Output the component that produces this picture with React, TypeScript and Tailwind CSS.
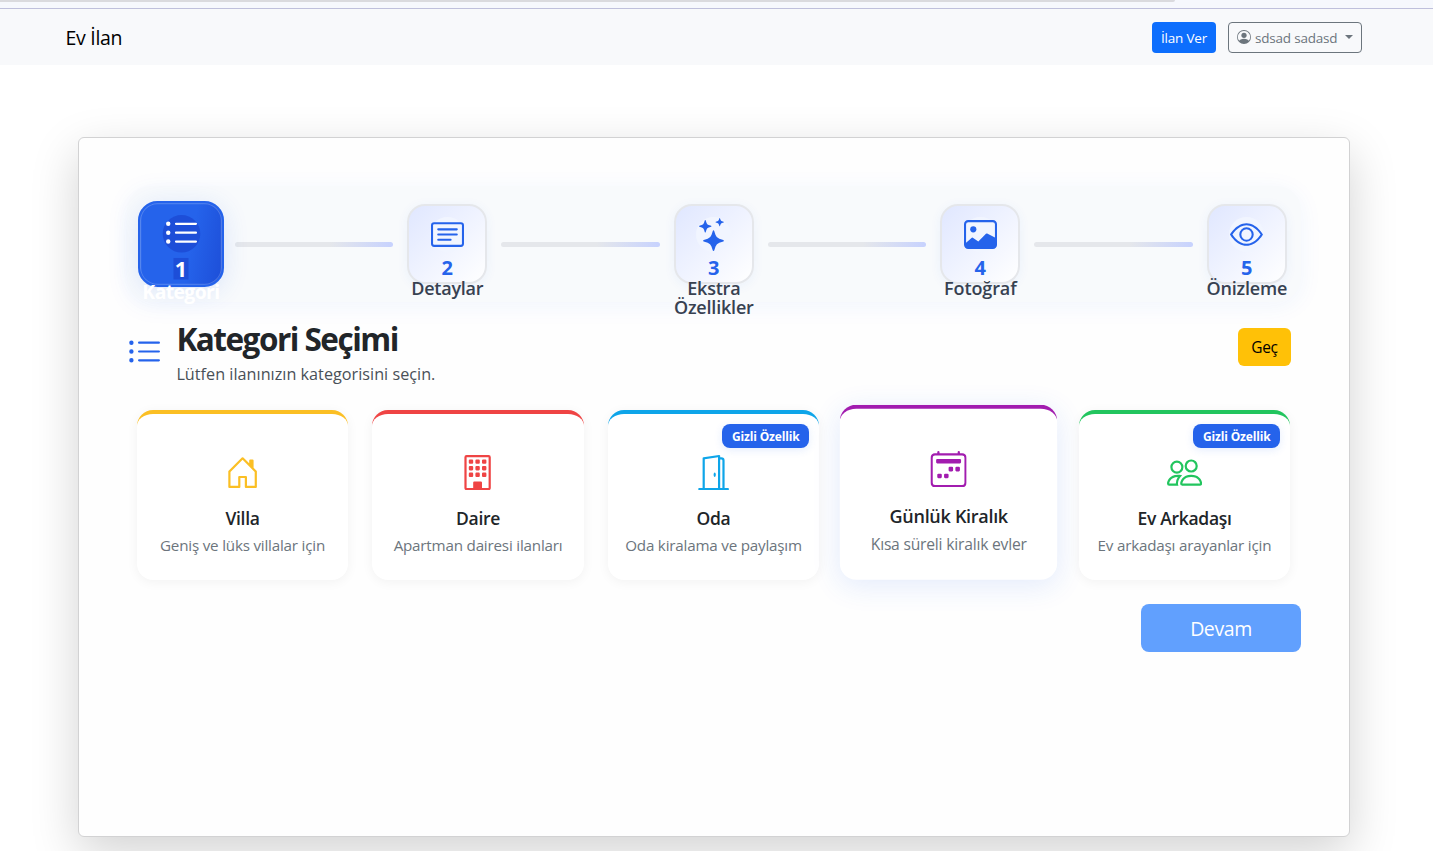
import type { IconType } from "react-icons";
import {
  BsBuilding,
  BsCalendar2Week,
  BsCardText,
  BsDoorOpen,
  BsEye,
  BsHouseDoor,
  BsImage,
  BsListUl,
  BsPeople,
  BsPersonCircle,
  BsStars,
} from "react-icons/bs";

type Step = { label: string; icon: IconType; labelClass: string };

const steps: Step[] = [
  { label: "Kategori", icon: BsListUl, labelClass: "tracking-[-0.55px]" },
  { label: "Detaylar", icon: BsCardText, labelClass: "tracking-[-0.25px]" },
  { label: "Ekstra Özellikler", icon: BsStars, labelClass: "tracking-[-0.2px]" },
  { label: "Fotoğraf", icon: BsImage, labelClass: "tracking-[-0.1px]" },
  { label: "Önizleme", icon: BsEye, labelClass: "tracking-[-0.2px]" },
];

type Category = {
  title: string;
  text: string;
  icon: IconType;
  border: string;
  color: string;
  hidden?: boolean;
  raised?: boolean;
};

const categories: Category[] = [
  { title: "Villa", text: "Geniş ve lüks villalar için", icon: BsHouseDoor, border: "border-[#fbbf24]", color: "text-[#fbbf24]" },
  { title: "Daire", text: "Apartman dairesi ilanları", icon: BsBuilding, border: "border-[#ef4444]", color: "text-[#ef4444]" },
  { title: "Oda", text: "Oda kiralama ve paylaşım", icon: BsDoorOpen, border: "border-[#0ea5e9]", color: "text-[#0ea5e9]", hidden: true },
  { title: "Günlük Kiralık", text: "Kısa süreli kiralık evler", icon: BsCalendar2Week, border: "border-[#a21caf]", color: "text-[#a21caf]", raised: true },
  { title: "Ev Arkadaşı", text: "Ev arkadaşı arayanlar için", icon: BsPeople, border: "border-[#22c55e]", color: "text-[#22c55e]", hidden: true },
];

function Header() {
  return (
    <header>
      <div className="h-2 bg-[#f6f8fd]">
        <div className="h-[2px] w-[1175px] rounded-br-lg bg-[#dadade]" />
      </div>
      <div className="h-px bg-[#bfc0dc]" />
      <div className="flex h-14 items-center justify-between bg-[#f8f9fb] pr-[71px] pl-[65.5px]">
        <span className="pt-[2px] text-[19.5px] tracking-[-0.3px] text-black">Ev İlan</span>
        <div className="flex gap-3">
          <button className="h-[31px] w-16 rounded bg-[#0d6efd] pt-[2px] text-[13.5px] tracking-[-0.2px] whitespace-nowrap text-white">
            İlan Ver
          </button>
          <button className="flex h-[31px] w-[134px] items-center rounded border border-[#6c757d] pl-2 text-[13.5px] whitespace-nowrap text-[#6c757d]">
            <BsPersonCircle className="mr-1 size-[14px]" />
            <span className="pt-[2px] tracking-[-0.2px]">sdsad sadasd</span>
            <span className="ml-2 border-x-4 border-t-4 border-x-transparent border-t-[#6c757d]" />
          </button>
        </div>
      </div>
    </header>
  );
}

function StepBox({ step, index }: { step: Step; index: number }) {
  const active = index === 0;
  const Icon = step.icon;
  return (
    <div
      className={
        active
          ? "flex size-20 shrink-0 scale-[1.075] flex-col items-center rounded-[18px] border-2 border-[#2563eb] bg-[linear-gradient(100deg,#2563eb_60%,#1d4ed8_100%)] pt-[11px] shadow-[0_4px_24px_rgba(37,99,235,0.14),inset_0_0_0_1px_rgba(255,255,255,0.2)]"
          : "flex size-20 shrink-0 flex-col items-center rounded-[18px] border-2 border-[#e5e7eb] bg-[linear-gradient(135deg,#e0e7ff_0%,#ffffff_100%)] pt-[11px] shadow-[0_2px_12px_rgba(37,99,235,0.06)]"
      }
    >
      <div
        className={
          active
            ? "flex size-[35px] shrink-0 items-center justify-center rounded-full bg-[#1d4ed8] text-white"
            : "flex size-[35px] shrink-0 items-center justify-center rounded-full bg-[#f1f5ff] text-[#2563eb]"
        }
      >
        <Icon className="size-[33px] shrink-0" />
      </div>
      <span
        className={
          active
            ? "mt-[5px] h-[20px] bg-[#1d4ed8] px-px text-[20px] leading-[21px] font-bold text-white"
            : "mt-[4px] h-[23px] text-[20px] leading-[23px] font-bold text-[#2563eb]"
        }
      >
        {index + 1}
      </span>
      <span
        className={`${step.labelClass} text-center text-[18px] leading-[19px] ${
          active ? "mt-[2px] font-bold text-white" : "font-semibold text-[#374151]"
        }`}
      >
        {step.label}
      </span>
    </div>
  );
}

function Stepper() {
  return (
    <div className="flex h-[116px] items-start rounded-[24px] bg-[#f8fafc] pt-[18px] pr-[14.2px] pl-[13.8px] shadow-[0_4px_24px_rgba(37,99,235,0.06)]">
      {steps.map((step, i) => (
        <div key={step.label} className={i === 0 ? "flex" : "flex flex-1"}>
          {i > 0 && (
            <div className="mx-[14px] mt-[38px] h-[5px] flex-1 rounded-full bg-[linear-gradient(90deg,#e5e7eb_60%,#c7d2fe_100%)]" />
          )}
          <StepBox step={step} index={i} />
        </div>
      ))}
    </div>
  );
}

function CategoryCard({ item }: { item: Category }) {
  const Icon = item.icon;
  return (
    <div
      className={`${item.border} relative flex h-[170px] flex-1 flex-col items-center rounded-2xl border-t-4 bg-white pt-[41px] ${
        item.raised
          ? "-translate-y-[2.8px] scale-[1.03] shadow-[0_6px_28px_rgba(37,99,235,0.12)]"
          : "shadow-[0_2px_12px_rgba(0,0,0,0.05)]"
      }`}
    >
      {item.hidden && (
        <span className="absolute top-[10px] right-[10px] flex h-6 w-[87px] items-center justify-center rounded-lg bg-[#2563eb] pt-px text-[12px] font-bold tracking-[-0.15px] whitespace-nowrap text-white shadow-[0_2px_8px_rgba(37,99,235,0.12)]">
          Gizli Özellik
        </span>
      )}
      <Icon className={`${item.color} size-[35.2px] shrink-0`} />
      <h3 className="mt-[17px] text-[17.5px] leading-[22px] font-semibold tracking-[-0.3px] text-[#212529]">{item.title}</h3>
      <p className="mt-[5px] text-[15.2px] leading-[23px] tracking-[-0.2px] whitespace-nowrap text-[#6c757d]">{item.text}</p>
    </div>
  );
}

export default function App() {
  return (
    <div className="h-[851px] overflow-hidden bg-white font-['Open_Sans','Noto_Sans',sans-serif]">
      <Header />
      <main className="mt-[72px] mr-[83px] ml-[78px] h-[700px] rounded-md border border-[#d2d2d3] bg-[#fefefe] px-12 pt-12 shadow-[0_16px_48px_rgba(0,0,0,0.175)]">
        <Stepper />
        <section className="flex h-[108px] items-start pt-[18px] pr-[10px]">
          <BsListUl className="mt-[15px] -ml-[0.4px] size-[35.2px] text-[#2563eb]" />
          <div className="ml-[14.6px] flex-1">
            <h1 className="text-[31.5px] leading-[38px] font-bold tracking-[-1.5px] text-[#212529]">Kategori Seçimi</h1>
            <p className="mt-[4px] text-[16.2px] leading-6 tracking-[0.02px] text-[#495057]">
              Lütfen ilanınızın kategorisini seçin.
            </p>
          </div>
          <button className="mt-2 h-[38px] w-[53px] rounded-md bg-[#ffc107] pt-[2px] text-[15.5px] tracking-[-0.3px] text-black">Geç</button>
        </section>
        <section className="flex gap-6 pr-[10.8px] pl-[9.8px]">
          {categories.map((item) => (
            <CategoryCard key={item.title} item={item} />
          ))}
        </section>
        <div className="mt-6 flex justify-end">
          <button className="h-12 w-40 rounded-lg bg-[#61a0fe] pt-[2px] text-[19.5px] tracking-[-0.4px] text-white">Devam</button>
        </div>
      </main>
    </div>
  );
}
